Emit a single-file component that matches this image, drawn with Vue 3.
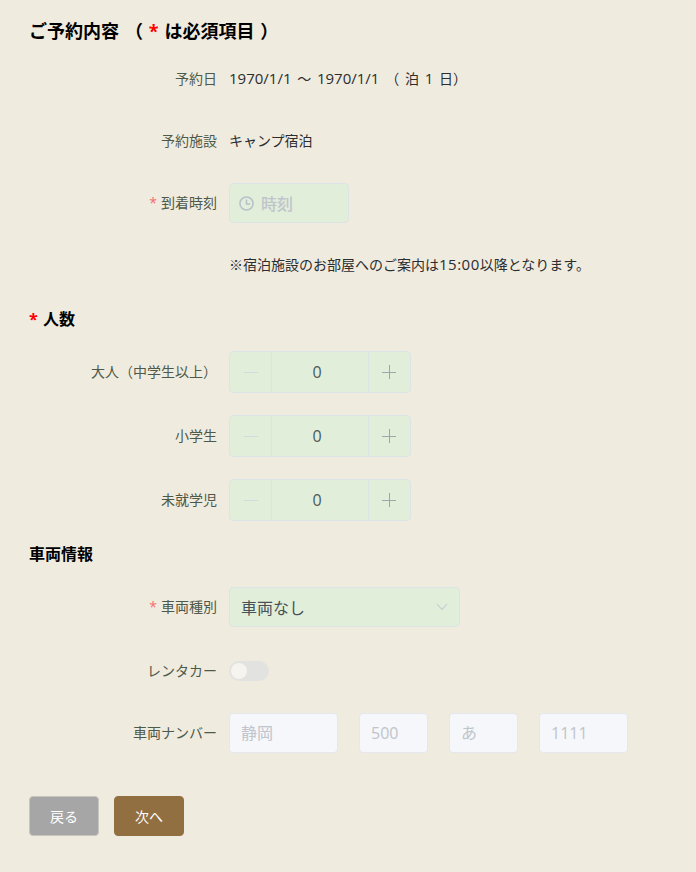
<script setup>
const counts = [
  { label: '大人（中学生以上）' },
  { label: '小学生' },
  { label: '未就学児' },
]
</script>

<template>
  <main class="page">
    <h2 class="title">ご予約内容 （ <span class="red">*</span> は必須項目 ）</h2>

    <section class="form-top">
      <div class="row">
        <label class="label">予約日</label>
        <div class="text dates"><span class="num">1970/1/1</span> ～ <span class="num">1970/1/1</span> （ 泊 <span class="num">1</span> 日）</div>
      </div>
      <div class="row">
        <label class="label">予約施設</label>
        <div class="text">キャンプ宿泊</div>
      </div>
      <div class="row">
        <label class="label"><span class="star">*</span>到着時刻</label>
        <div class="field time">
          <svg class="clock" viewBox="0 0 16 16" width="15" height="15" fill="none" stroke="#b9c2cc" stroke-width="1.7">
            <circle cx="8" cy="8" r="7" />
            <path d="M8 3.8V8.6H12" />
          </svg>
          <span class="ph">時刻</span>
        </div>
      </div>
      <div class="row">
        <label class="label"></label>
        <div class="text">※宿泊施設のお部屋へのご案内は<span class="num clock-time">15:00</span>以降となります。</div>
      </div>
    </section>

    <h3 class="sub first"><span class="red">*</span> 人数</h3>
    <section class="counts">
      <div v-for="c in counts" :key="c.label" class="row">
        <label class="label">{{ c.label }}</label>
        <div class="stepper">
          <span class="step minus"><i class="bar"></i></span>
          <span class="value">0</span>
          <span class="step plus"><i class="bar"></i><i class="bar vert"></i></span>
        </div>
      </div>
    </section>

    <h3 class="sub second">車両情報</h3>
    <section class="vehicle">
      <div class="row select-row">
        <label class="label"><span class="star">*</span>車両種別</label>
        <div class="field select">
          <span>車両なし</span>
          <svg viewBox="0 0 12 8" width="12" height="8" fill="none" stroke="#c6ced6" stroke-width="1.1"><path d="M1 1.2L6 6.4L11 1.2" /></svg>
        </div>
      </div>
      <div class="row">
        <label class="label">レンタカー</label>
        <div class="switch"><span class="knob"></span></div>
      </div>
      <div class="row">
        <label class="label">車両ナンバー</label>
        <div class="plates">
          <div class="plate w1">静岡</div>
          <div class="plate w2">500</div>
          <div class="plate w3">あ</div>
          <div class="plate w4">1111</div>
        </div>
      </div>
    </section>

    <div class="actions">
      <button class="btn back" type="button">戻る</button>
      <button class="btn next" type="button">次へ</button>
    </div>
  </main>
</template>

<style>
html, body { margin: 0; background: #f0ebdf; }
</style>

<style scoped>
.page {
  box-sizing: border-box;
  width: 696px;
  height: 872px;
  padding: 20px 0 0 29px;
  background: #f0ebdf;
  color: #2b2d2f;
  font-family: "Open Sans", "Noto Sans CJK JP", sans-serif;
  overflow: hidden;
}
.title {
  margin: 0;
  font-size: 18px;
  line-height: 22px;
  font-weight: 700;
  color: #000;
  word-spacing: 1.2px;
}
.red { color: #f00; }
.row {
  display: flex;
  align-items: center;
  height: 40px;
}
.label {
  box-sizing: border-box;
  width: 200px;
  padding-right: 12px;
  text-align: right;
  font-size: 14px;
  color: #4d5a4a;
  line-height: 40px;
  white-space: nowrap;
}
.star { color: #f56c6c; margin-right: 4px; }
.text { font-size: 14px; line-height: 40px; height: 40px; white-space: nowrap; }
.dates { word-spacing: 2.1px; }
.num { font-size: 15px; line-height: 1; }
.clock-time { letter-spacing: 0.5px; }
.form-top { margin-top: 17px; display: flex; flex-direction: column; gap: 22px; }
.field {
  box-sizing: border-box;
  height: 40px;
  display: flex;
  align-items: center;
  background: #e1eed9;
  border: 1px solid #dde4e6;
  border-radius: 4px;
}
.time { width: 120px; padding-left: 9px; gap: 7px; }
.clock { flex: none; }
.ph { font-size: 16px; color: #c0c4cc; font-weight: 500; }
.sub {
  margin: 0;
  font-size: 16px;
  line-height: 20px;
  font-weight: 700;
  color: #000;
  word-spacing: 1px;
}
.first { margin-top: 24px; }
.counts { margin-top: 22px; display: flex; flex-direction: column; gap: 22px; }
.counts .row { height: 42px; }
.stepper {
  box-sizing: border-box;
  width: 182px;
  height: 42px;
  display: flex;
  background: #e1eed9;
  border: 1px solid #dde4e6;
  border-radius: 4px;
}
.step {
  position: relative;
  flex: none;
  width: 41px;
}
.minus { border-right: 1px solid #dde4e6; }
.plus { border-left: 1px solid #dde4e6; }
.bar {
  position: absolute;
  left: 13px;
  top: 20px;
  width: 14px;
  height: 1px;
  background: #9da6a8;
}
.minus .bar { left: 14px; background: #d3dade; }
.vert { left: 20px; top: 13px; width: 1px; height: 14px; }
.value {
  flex: 1;
  padding-right: 6px;
  text-align: center;
  font-size: 16px;
  line-height: 40px;
  color: #4a5a5a;
}
.second { margin-top: 23px; }
.vehicle { margin-top: 23px; display: flex; flex-direction: column; gap: 22px; }
.select-row { margin-bottom: 2px; }
.select {
  width: 231px;
  justify-content: space-between;
  padding: 0 11px 0 11px;
  font-size: 16px;
  color: #475055;
}
.switch {
  position: relative;
  width: 40px;
  height: 20px;
  border-radius: 10px;
  background: #e2e2e0;
}
.knob {
  position: absolute;
  left: 2px;
  top: 2px;
  width: 16px;
  height: 16px;
  border-radius: 50%;
  background: #f6f4ee;
}
.plates { display: flex; gap: 21px; }
.plate {
  box-sizing: border-box;
  height: 40px;
  padding-left: 11px;
  background: #f5f7fa;
  border: 1px solid #e4e7ed;
  border-radius: 4px;
  color: #c0c4cc;
  font-size: 16px;
  line-height: 38px;
}
.w1 { width: 109px; }
.w2 { width: 69px; }
.w3 { width: 69px; }
.w4 { width: 89px; }
.actions { margin-top: 43px; display: flex; gap: 15px; }
.btn {
  width: 70px;
  height: 40px;
  padding: 0;
  border: 1px solid #c8c5bf;
  border-radius: 4px;
  color: #fff;
  font-family: inherit;
  font-size: 14px;
}
.back { background: #a6a6a6; }
.next { background: #926f41; border-color: #926f41; }
</style>
